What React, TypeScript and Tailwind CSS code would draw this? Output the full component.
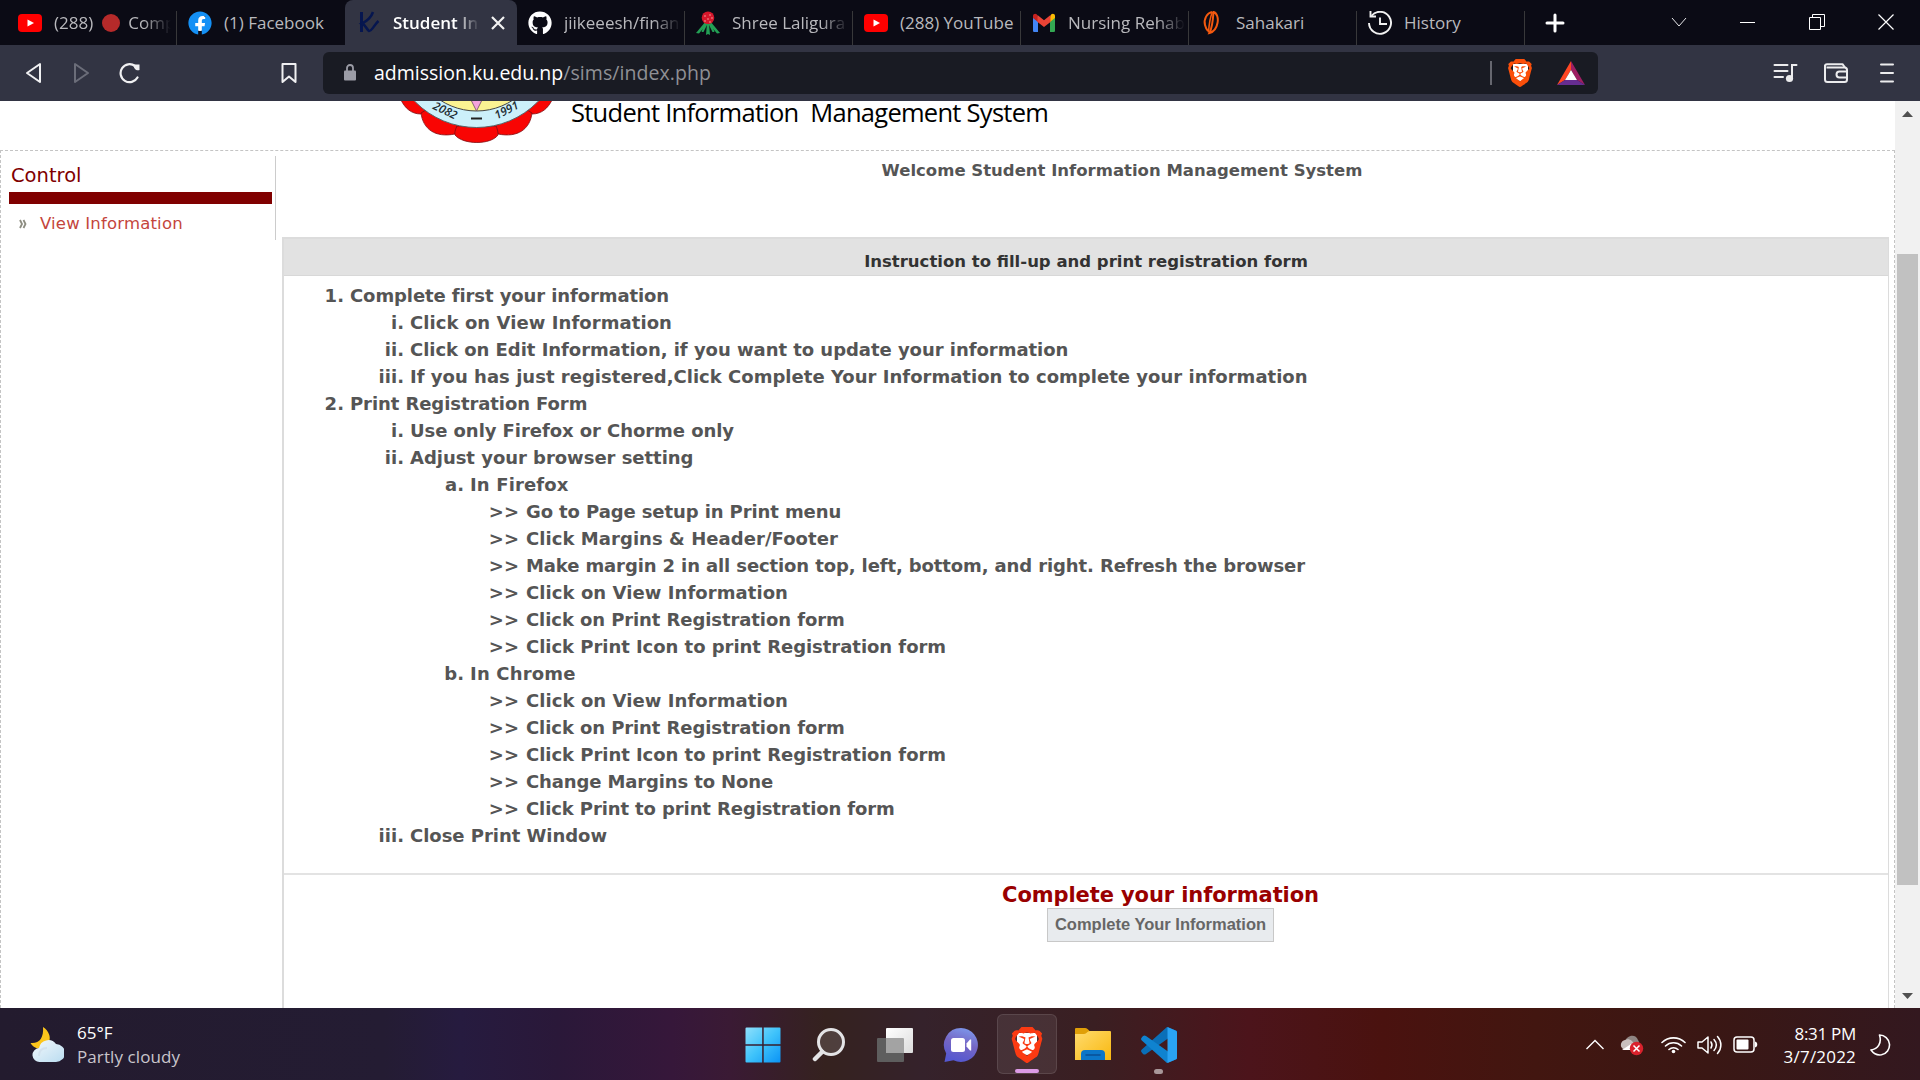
import type { ReactNode } from "react";
import { FaFacebook, FaGithub } from "react-icons/fa";
import { SiBrave } from "react-icons/si";

/* ---------- Favicons ---------- */

const YouTube = () => (
  <svg width="24" height="24" viewBox="0 0 24 24">
    <rect x="0" y="3" width="24" height="18" rx="4" fill="#f00" />
    <path d="M9.500 8.500v7l6.500-3.500z" fill="#fff" />
  </svg>
);

const Facebook = () => (
  <span className="relative flex size-6 items-center justify-center">
    <span className="absolute size-4 rounded-full bg-white" />
    <FaFacebook className="relative size-6 text-[#1490f5]" />
  </span>
);

const KFavicon = () => (
  <svg width="24" height="24" viewBox="0 0 24 24" fill="none" stroke="#06164f">
    <path d="M4.500 1v20" strokeWidth="3" />
    <path d="M16 1C14 7 10 10 5 12.500c3.500 1 4.500 6 7 7.500C15 20 17 14 21.500 10" strokeWidth="2.500" />
  </svg>
);

const Rhododendron = () => (
  <svg width="24" height="24" viewBox="0 0 24 24">
    <g fill="#23a055">
      <path d="M10 10 0 22l3 .5L11 13z" />
      <path d="M14 10l10 12-3 .5L13 13z" />
      <path d="M11 12l-1 12 2-1 2 1-1-12z" />
      <path d="M9 11 5.500 21h2L12 12z" />
      <path d="M15 11l3.500 10h-2L12 12z" />
    </g>
    <circle cx="12" cy="6.800" r="6.300" fill="#d5172b" />
    <g fill="#f5a6a0">
      <circle cx="9" cy="5" r=".8" />
      <circle cx="14" cy="4" r=".8" />
      <circle cx="12" cy="8" r=".8" />
      <circle cx="16" cy="7" r=".8" />
      <circle cx="9" cy="10" r=".8" />
      <circle cx="14" cy="11" r=".8" />
    </g>
  </svg>
);

const Gmail = () => (
  <svg width="24" height="24" viewBox="0 0 24 24">
    <path d="M1 6.500v13.200c0 .7.600 1.300 1.300 1.300H6V10z" fill="#4285f4" />
    <path d="M23 6.500v13.200c0 .7-.6 1.300-1.300 1.300H18V10z" fill="#34a853" />
    <path d="M18 5.500V11l5-4V5c0-2-2.200-3-3.700-1.700z" fill="#fbbc04" />
    <path d="M1 5v2l5 4V5.500L4.700 3.300C3.200 2 1 3 1 5z" fill="#c5221f" />
    <path d="M5.500 4 12 9.200 18.500 4v7L12 16 5.500 11z" fill="#ea4335" />
  </svg>
);

const Sahakari = () => (
  <svg width="24" height="24" viewBox="0 0 24 24" fill="none" stroke="#f4590f">
    <path d="M12 1C7 2 3.500 8 5 14c.6 2.500 1.500 4.500 3 6" strokeWidth="2" />
    <path d="M12.500 1C10 6 9 14 8.500 21.500" strokeWidth="1.600" />
    <path d="M13.500 1c3.500 1 5 6 4 11-1 5.500-4.500 9-8 10C12 17 13 9 13.500 1z" strokeWidth="2" />
  </svg>
);

const HistoryIcon = () => (
  <svg width="24" height="24" viewBox="0 0 24 24" fill="none" stroke="#f2f2f2" strokeWidth="1.900">
    <path d="M3.500 4.800A11 11 0 1 1 1 12" />
    <path d="M2.500 0v5.500H8" />
    <path d="M12 6.500V13h7" />
  </svg>
);

/* ---------- Tab strip ---------- */

type TabData = { label: ReactNode; icon: ReactNode; fade?: boolean };

const leftTabs: TabData[] = [
  {
    label: (
      <span className="flex items-center">
        (288)
        <span className="mr-[8px] ml-[9px] inline-block size-[18px] shrink-0 rounded-full bg-[#b62a2a]" />
        Comp
      </span>
    ),
    icon: <YouTube />,
    fade: true,
  },
  { label: "(1) Facebook", icon: <Facebook /> },
];

const rightTabs: TabData[] = [
  { label: "jiikeeesh/finan", icon: <FaGithub className="size-6 text-white" />, fade: true },
  { label: "Shree Laligura", icon: <Rhododendron />, fade: true },
  { label: "(288) YouTube", icon: <YouTube /> },
  { label: "Nursing Rehab", icon: <Gmail />, fade: true },
  { label: "Sahakari", icon: <Sahakari /> },
  { label: "History", icon: <HistoryIcon /> },
];

function Tab({ tab, divider, first }: { tab: TabData; divider: boolean; first?: boolean }) {
  return (
    <div className="flex h-[45px] w-[168px] items-end">
      <div
        className={
          first
            ? "flex h-[45px] flex-1 items-center gap-3 overflow-hidden pl-[9px]"
            : "flex h-[45px] flex-1 items-center gap-3 overflow-hidden pl-[11px]"
        }
      >
        <span className="shrink-0">{tab.icon}</span>
        <span
          className={
            tab.fade
              ? "w-[117px] shrink-0 overflow-hidden text-[17px] whitespace-nowrap text-[#b9b9bd] [mask-image:linear-gradient(to_right,#000_76%,transparent)]"
              : "shrink-0 text-[17px] whitespace-nowrap text-[#b9b9bd]"
          }
        >
          {tab.label}
        </span>
      </div>
      <div className={divider ? "h-[34px] w-[1.500px] bg-[#38383a]" : "w-[1.500px]"} />
    </div>
  );
}

function TabStrip() {
  return (
    <div className="flex h-[45px] bg-[#0b0b15] pl-[9px]">
      {leftTabs.map((t, i) => (
        <Tab key={i} tab={t} divider={i === 0} first={i === 0} />
      ))}
      <div className="flex h-[45px] w-[172px] items-center rounded-t-lg bg-[#323443] pl-3">
        <KFavicon />
        <span className="ml-3 w-[88px] text-[17px] font-semibold whitespace-nowrap text-white [mask-image:linear-gradient(to_right,#000_70%,transparent_98%)]">
          Student In
        </span>
        <svg className="ml-[10px]" width="14" height="14" viewBox="0 0 14 14" stroke="#f2f2f2" strokeWidth="2.200">
          <path d="M1 1l12 12M13 1 1 13" />
        </svg>
      </div>
      {rightTabs.map((t, i) => (
        <Tab key={i} tab={t} divider />
      ))}
      <div className="flex flex-1 items-center pl-5">
        <svg width="20" height="20" viewBox="0 0 20 20" stroke="#fff" strokeWidth="3" strokeLinecap="round">
          <path d="M10 2v16M2 10h16" />
        </svg>
        <div className="ml-auto flex items-center gap-[53px] pr-[26px] pb-[2px]">
          <svg width="16" height="16" viewBox="0 0 16 16" fill="none" stroke="#e8e8ea" strokeWidth="1">
            <path d="M1 4l7 8 7-8" />
          </svg>
          <svg width="16" height="16" viewBox="0 0 16 16" fill="#fff">
            <path d="M0 8h15v1H0z" />
          </svg>
          <svg width="16" height="16" viewBox="0 0 16 16" fill="none" stroke="#fff" strokeWidth="1">
            <path d="M.5 3.500h11v12H.5zM3.500 3.500v-3h12v12h-4" />
          </svg>
          <svg width="16" height="16" viewBox="0 0 16 16" stroke="#fff" strokeWidth="1.200">
            <path d="M.5.5l15 15M15.500.5l-15 15" />
          </svg>
        </div>
      </div>
    </div>
  );
}

/* ---------- Toolbar ---------- */

function BraveLion({ className, face }: { className: string; face: string }) {
  return (
    <span className="relative flex items-center justify-center">
      <span className={face} />
      <SiBrave className={className} />
    </span>
  );
}

function Toolbar() {
  return (
    <div className="flex h-14 items-center bg-[#323443] pr-[26px] pb-px pl-[25px]">
      <svg width="18" height="22" viewBox="0 0 18 22" fill="none" stroke="#f0f0f2" strokeWidth="2" strokeLinejoin="round">
        <path d="M15 2v18L2 11z" />
      </svg>
      <svg className="ml-[30px]" width="18" height="22" viewBox="0 0 18 22" fill="none" stroke="#6b6d79" strokeWidth="2" strokeLinejoin="round">
        <path d="M2 2v18l13-9z" />
      </svg>
      <svg className="ml-[27px]" width="24" height="22" viewBox="0 0 24 22" fill="none" stroke="#f0f0f2" strokeWidth="2.200" strokeLinecap="round">
        <path d="M19.500 15.500A9 9 0 1 1 17 4" />
        <path d="M15.500 2.500h6v5.500c-3 1-6-1-6-5.500z" fill="#f0f0f2" stroke="none" />
      </svg>
      <svg className="ml-[139px]" width="16" height="22" viewBox="0 0 16 22" fill="none" stroke="#f0f0f2" strokeWidth="2" strokeLinejoin="round">
        <path d="M1.500 2h13v18L8 14.500 1.500 20z" />
      </svg>
      <div className="ml-[26px] flex h-[42px] w-[1275px] items-center rounded-md bg-[#191b23] pr-[13px] pl-[21px]">
        <svg width="12" height="17" viewBox="0 0 12 17">
          <rect x="0" y="6.500" width="12" height="10" rx="1" fill="#9b9ca6" />
          <path d="M3 7V4a3 3 0 0 1 6 0v3" fill="none" stroke="#9b9ca6" strokeWidth="1.800" />
        </svg>
        <span className="ml-[18px] text-[19.500px] whitespace-nowrap text-white">
          admission.ku.edu.np<span className="tracking-[0.060px] text-[#8f9095]">/sims/index.php</span>
        </span>
        <span className="ml-auto h-6 w-[2px] bg-[#66676f]" />
        <span className="ml-[14px]">
          <BraveLion
            className="relative size-7 text-[#fb4f0a]"
            face="absolute top-[5px] h-[17px] w-[15px] rounded-b-full rounded-t bg-white"
          />
        </span>
        <svg className="ml-[23px]" width="28" height="24" viewBox="0 0 28 24">
          <path d="M14 0 0 24l8-5 6-10z" fill="#ff4724" />
          <path d="M14 0l14 24-8-5-6-10z" fill="#9e1f63" />
          <path d="M0 24h28l-8-5H8z" fill="#662d91" />
          <path d="M14 9l6 10H8z" fill="#fff" />
        </svg>
      </div>
      <svg className="ml-auto" width="25" height="20" viewBox="0 0 25 20" fill="none" stroke="#ececee" strokeWidth="2" strokeLinecap="round">
        <path d="M1.500 2h13M1.500 8h13M1.500 14H10" />
        <path d="M19 15.500V2h4.500" />
        <circle cx="16.500" cy="15.500" r="3.600" fill="#ececee" stroke="none" />
      </svg>
      <svg className="ml-[26px]" width="24" height="20" viewBox="0 0 24 20" fill="none" stroke="#ececee" strokeWidth="2" strokeLinejoin="round">
        <path d="M1 2v14.500c0 1.400.8 2.500 2.500 2.500h17c1.500 0 2.500-1 2.500-2.500V7c0-1.500-1-2.500-2.500-2.500H2.500" />
        <path d="M1 3.500C1 1.800 2 1.200 3 1.200h15.500L21 4.500" />
        <path d="M23 8.500h-7.500a3 3 0 0 0 0 6H23" />
      </svg>
      <svg className="ml-[32px]" width="14" height="20" viewBox="0 0 14 20" stroke="#ececee" strokeWidth="2" strokeLinecap="round">
        <path d="M1 1.500h12M1 10h12M1 18.500h12" />
      </svg>
    </div>
  );
}

/* ---------- Page ---------- */

function Seal() {
  return (
    <svg width="160" height="44" viewBox="396 101 160 44">
      <g fill="#f90503" stroke="#7d0d12" strokeWidth=".8">
        <path d="M401 100c4 8 10 14 20 14l14-14z" />
        <path d="M552 100c-4 8-10 14-20 14l-14-14z" />
        <path d="M421 113c2 16 14 25 34 21l4-14-30-12z" />
        <path d="M532 113c-2 16-14 25-34 21l-4-14 30-12z" />
        <path d="M457 126c-3 6-2 8-2 9 8 10 36 10 43 0 0-1 0-5-2-9z" />
      </g>
      <circle cx="476.500" cy="41.500" r="86" fill="#ccf0fa" stroke="#54666b" strokeWidth="1" />
      <circle cx="476.500" cy="45" r="66" fill="#fbf392" stroke="#444" strokeWidth="1" />
      <path d="M470 98h13l-6.500 13z" fill="#f5a3dc" stroke="#6b4a60" strokeWidth=".8" />
      <rect x="471" y="117.500" width="11" height="2" fill="#222" />
      <g fontFamily="'Open Sans', sans-serif" fontStyle="italic" fontWeight="600" fontSize="11.500" fill="#1c2a30">
        <text transform="translate(432 108.500) rotate(26)">2082</text>
        <text transform="translate(497 119.500) rotate(-27)">1991</text>
      </g>
    </svg>
  );
}

type Row = { mark: string; text: string; level: 0 | 1 | 2 | 3; track?: string };

const rows: Row[] = [
  { level: 0, mark: "1.", text: "Complete first your information", track: "tracking-[-0.100px]" },
  { level: 1, mark: "i.", text: "Click on View Information", track: "tracking-[0.070px]" },
  { level: 1, mark: "ii.", text: "Click on Edit Information, if you want to update your information", track: "tracking-[-0.035px]" },
  { level: 1, mark: "iii.", text: "If you has just registered,Click Complete Your Information to complete your information" },
  { level: 0, mark: "2.", text: "Print Registration Form", track: "tracking-[-0.080px]" },
  { level: 1, mark: "i.", text: "Use only Firefox or Chorme only", track: "tracking-[-0.060px]" },
  { level: 1, mark: "ii.", text: "Adjust your browser setting", track: "tracking-[-0.030px]" },
  { level: 2, mark: "a.", text: "In Firefox", track: "tracking-[0.140px]" },
  { level: 3, mark: ">>", text: "Go to Page setup in Print menu", track: "tracking-[-0.100px]" },
  { level: 3, mark: ">>", text: "Click Margins & Header/Footer", track: "tracking-[0.060px]" },
  {
    level: 3,
    mark: ">>",
    text: "Make margin 2 in all section top, left, bottom, and right. Refresh the browser",
    track: "tracking-[-0.115px]",
  },
  { level: 3, mark: ">>", text: "Click on View Information", track: "tracking-[0.070px]" },
  { level: 3, mark: ">>", text: "Click on Print Registration form", track: "tracking-[-0.085px]" },
  { level: 3, mark: ">>", text: "Click Print Icon to print Registration form", track: "tracking-[-0.035px]" },
  { level: 2, mark: "b.", text: "In Chrome", track: "tracking-[0.180px]" },
  { level: 3, mark: ">>", text: "Click on View Information", track: "tracking-[0.070px]" },
  { level: 3, mark: ">>", text: "Click on Print Registration form", track: "tracking-[-0.085px]" },
  { level: 3, mark: ">>", text: "Click Print Icon to print Registration form", track: "tracking-[-0.035px]" },
  { level: 3, mark: ">>", text: "Change Margins to None", track: "tracking-[-0.130px]" },
  { level: 3, mark: ">>", text: "Click Print to print Registration form", track: "tracking-[-0.105px]" },
  { level: 1, mark: "iii.", text: "Close Print Window", track: "tracking-[-0.030px]" },
];

const markBox = ["w-[66px] pr-[6px]", "w-[126px] pr-[6px]", "w-[186px] pr-[6px]", "w-[242px] pr-[7px]"];

function Instructions() {
  return (
    <div className="h-[597px] pt-[6px] text-[18px] leading-[27px] font-bold tracking-[0.020px] text-[#555]">
      {rows.map((r, i) => (
        <div key={i} className="flex whitespace-nowrap">
          <span className={`${markBox[r.level]} shrink-0 text-right`}>{r.mark}</span>
          <span className={r.track}>{r.text}</span>
        </div>
      ))}
    </div>
  );
}

function Sidebar() {
  return (
    <div className="h-[84px] w-[275px] shrink-0 border-r border-[#ccc] pl-2">
      <div className="h-9 pt-[6px] pl-[2px] text-[19.500px] leading-[28px] text-[#800000]">Control</div>
      <div className="h-3 w-[263px] bg-[#800000]" />
      <div className="flex items-center pt-[6px] pl-[10px]">
        <svg width="8" height="10" viewBox="0 0 8 10" fill="none" stroke="#8c8c80" strokeWidth="1.800">
          <path d="M1 1l2 4-2 4M4.500 1l2 4-2 4" />
        </svg>
        <span className="ml-[13px] text-[16.500px] leading-[28px] tracking-[0.180px] text-[#c4453c]">View Information</span>
      </div>
    </div>
  );
}

function Page() {
  return (
    <div className="flex h-[907px] bg-white font-['DejaVu_Sans',Verdana,sans-serif]">
      <div className="flex w-[1895px] flex-col overflow-hidden">
        <div className="flex h-[49px] shrink-0 pl-[396px]">
          <Seal />
          <span className="ml-[15px] font-['Open_Sans',sans-serif] text-[25.500px] leading-[23px] tracking-[-0.730px] whitespace-pre text-black">
            {"Student Information  Management System"}
          </span>
        </div>
        <div className="flex flex-1 border-x border-t border-dashed border-[#c4c4c4] pt-[5px]">
          <Sidebar />
          <div className="ml-[6px] flex w-[1607px] flex-col">
            <div className="h-[81px] shrink-0 pt-px pl-[73px] text-center text-[16.500px] leading-[28px] font-bold text-[#555]">
              Welcome Student Information Management System
            </div>
            <div className="flex-1 border-t-2 border-r border-l-2 border-[#dcdcdc]">
              <div className="h-[37px] border-b border-[#d8d8d8] bg-[#e2e2e2] pt-[9px] text-center text-[16.500px] leading-[27px] font-bold text-[#333]">
                Instruction to fill-up and print registration form
              </div>
              <Instructions />
              <div className="flex flex-col items-center border-t-2 border-[#e3e3e3] pt-[7px] pl-[149px]">
                <span className="text-[21px] leading-[26px] font-bold tracking-[-0.100px] text-[#990000]">
                  Complete your information
                </span>
                <button className="h-[34px] w-[227px] border border-[#c8c8c8] bg-[#e8ebee] pb-[2px] font-['Liberation_Sans',Arial,sans-serif] text-[16.500px] leading-none font-bold text-[#666]">
                  Complete Your Information
                </button>
              </div>
            </div>
          </div>
        </div>
      </div>
      <div className="flex w-[25px] flex-col items-center bg-[#f1f1f1]">
        <svg className="mt-[10px]" width="11" height="6" viewBox="0 0 11 6" fill="#505050">
          <path d="M0 6 5.500 0 11 6z" />
        </svg>
        <div className="mt-[137px] h-[631px] w-[21px] bg-[#c1c1c1]" />
        <svg className="mt-auto mb-[9px]" width="11" height="6" viewBox="0 0 11 6" fill="#505050">
          <path d="M0 0h11L5.500 6z" />
        </svg>
      </div>
    </div>
  );
}

/* ---------- Taskbar ---------- */

const WindowsLogo = () => (
  <svg width="36" height="36" viewBox="0 0 36 36">
    <defs>
      <linearGradient id="win" x1="0" y1="0" x2="1" y2="1">
        <stop offset="0" stopColor="#8fe0fb" />
        <stop offset=".5" stopColor="#3fc3fb" />
        <stop offset="1" stopColor="#0a93f5" />
      </linearGradient>
    </defs>
    <path d="M1.500.5h15.700v16.700H.5V1.500a1 1 0 0 1 1-1zM18.700.5h15.800a1 1 0 0 1 1 1v15.700H18.700zM.5 18.700h16.700v16.800H1.500a1 1 0 0 1-1-1zM18.700 18.700h16.800v15.800a1 1 0 0 1-1 1H18.700z" fill="url(#win)" />
  </svg>
);

const SearchLogo = () => (
  <svg width="34" height="36" viewBox="0 0 34 36" fill="none" stroke="#e4e4e6">
    <circle cx="19" cy="15" r="12.500" strokeWidth="3" fill="#ffffff22" />
    <path d="M10 25l-7 7" strokeWidth="4.500" strokeLinecap="round" />
  </svg>
);

const TaskViewLogo = () => (
  <svg width="36" height="34" viewBox="0 0 36 34">
    <defs>
      <linearGradient id="tv" x1="0" y1="0" x2="1" y2="1">
        <stop offset="0" stopColor="#fff" />
        <stop offset="1" stopColor="#dcdcdc" />
      </linearGradient>
    </defs>
    <rect x="0" y="10" width="27" height="24" rx="1" fill="#5e5e5e" />
    <rect x="9" y="0" width="27" height="25" rx="1" fill="url(#tv)" />
    <path d="M9 10h17a1 1 0 0 1 1 1v14H9z" fill="#a3a3a3" />
  </svg>
);

const ChatLogo = () => (
  <svg width="36" height="36" viewBox="0 0 36 36">
    <defs>
      <linearGradient id="chat" x1="0.800" y1="0" x2="0.500" y2="1">
        <stop offset="0" stopColor="#7d9bee" />
        <stop offset=".5" stopColor="#7566c4" />
        <stop offset="1" stopColor="#5558d0" />
      </linearGradient>
    </defs>
    <path d="M18 1a17 17 0 1 1-7.500 32.300L1.500 35l1.700-8.500A17 17 0 0 1 18 1z" fill="url(#chat)" />
    <rect x="8" y="11" width="14" height="14" rx="2.500" fill="#fff" />
    <path d="M23.500 16.500l3.500-4h1.200v11H27l-3.500-4z" fill="#fff" />
  </svg>
);

const FolderLogo = () => (
  <svg width="36" height="32" viewBox="0 0 36 32">
    <defs>
      <linearGradient id="fold" x1="0" y1="0" x2="1" y2="1">
        <stop offset="0" stopColor="#ffdb6e" />
        <stop offset="1" stopColor="#f9b80f" />
      </linearGradient>
    </defs>
    <path d="M0 1a1 1 0 0 1 1-1h9c2 0 3 1.500 5 3.500L13 8H0z" fill="#e09f08" />
    <path d="M0 6h9c3 0 3-3 6-3h20a1 1 0 0 1 1 1v28H0z" fill="url(#fold)" />
    <path d="M6 32v-6a4 4 0 0 1 4-4h16a4 4 0 0 1 4 4v6z" fill="#0b76c8" />
    <path d="M11 27h14" stroke="#0a4f94" strokeWidth="1.500" strokeLinecap="round" />
  </svg>
);

const CodeLogo = () => (
  <svg width="36" height="36" viewBox="0 0 36 36">
    <path d="M26 0l10 4v6.500l-9 1L5 27c-1 .8-2 .7-3 0L.8 25.500c-1-1-1-2 0-3z" fill="#0a6fb8" />
    <path d="M26 36l10-4v-6.500l-9-1L5 9c-1-.8-2-.7-3 0L.8 10.500c-1 1-1 2 0 3z" fill="#0f83d0" />
    <path d="M26.500 0l8 3.500A2.500 2.500 0 0 1 36 6v24a2.500 2.500 0 0 1-1.500 2.500l-8 3.500z" fill="#2aa3f3" />
  </svg>
);

function WeatherIcon() {
  return (
    <svg width="34" height="38" viewBox="0 0 34 38">
      <defs>
        <linearGradient id="cl" x1="0" y1="0" x2="1" y2="1">
          <stop offset="0" stopColor="#f3f8fc" />
          <stop offset="1" stopColor="#b9dcf0" />
        </linearGradient>
      </defs>
      <path d="M13 1c6 4 8 10 6 15s-6 8-10 7-7-3-8.500-6C9 18 14 12 13 1z" fill="#fcc61c" />
      <path d="M10 36a7 7 0 0 1-1-14 9.500 9.500 0 0 1 17-4 9 9 0 0 1 0 18z" fill="url(#cl)" />
      <path d="M9 30c0-5 3-8 8-8" stroke="#d3e2ee" strokeWidth="2" fill="none" />
    </svg>
  );
}

function Dock() {
  return (
    <div className="flex h-[60px] w-[462px] items-center">
      {[WindowsLogo, SearchLogo, TaskViewLogo, ChatLogo].map((Logo, i) => (
        <div key={i} className="flex w-[66px] justify-center pt-[2px]">
          <Logo />
        </div>
      ))}
      <div className="flex w-[66px] justify-center">
        <div className="flex h-[60px] w-[60px] flex-col items-center rounded-md border border-white/10 bg-white/8 pt-[12px]">
          <BraveLion
            className="relative size-9 text-[#fb3a12]"
            face="absolute top-[6px] h-[22px] w-5 rounded-b-full rounded-t bg-white"
          />
          <div className="mt-[6px] h-[5px] w-6 rounded-full bg-[#dc9be6]" />
        </div>
      </div>
      <div className="flex w-[66px] justify-center">
        <FolderLogo />
      </div>
      <div className="flex h-[60px] w-[66px] flex-col items-center pt-[13px]">
        <CodeLogo />
        <div className="mt-[6px] h-[5px] w-[9px] rounded-full bg-[#a89799]" />
      </div>
    </div>
  );
}

function Tray() {
  return (
    <div className="flex items-center pt-px">
      <svg width="18" height="11" viewBox="0 0 18 11" fill="none" stroke="#fff" strokeWidth="1.400">
        <path d="M.5 10 9 1.500l8.500 8.500" />
      </svg>
      <svg className="ml-[15px]" width="25" height="22" viewBox="0 0 25 22">
        <path d="M6 8C7 1 17-1 19 6c2 2 1 7-3 8H6z" fill="#8f8482" />
        <path d="M4 15a5 5 0 0 1 2-9c4-2 8 1 9 4l-4 5z" fill="#c9c0be" />
        <path d="M3 16 12 10l7 6z" fill="#fff" />
        <circle cx="17.500" cy="14.500" r="6.700" fill="#d9222c" />
        <path d="M14.500 11.500l6 6M20.500 11.500l-6 6" stroke="#fff" strokeWidth="1.500" />
      </svg>
      <svg className="ml-[17px]" width="25" height="19" viewBox="0 0 25 19" fill="none" stroke="#fff" strokeWidth="1.600" strokeLinecap="round">
        <path d="M1 7.500a16.500 16.500 0 0 1 23 0M4.500 11a11.500 11.500 0 0 1 16 0M8 14.500a6.500 6.500 0 0 1 9 0" />
        <circle cx="12.500" cy="16.500" r="1.800" fill="#fff" stroke="none" />
      </svg>
      <svg className="ml-[11px]" width="25" height="20" viewBox="0 0 25 20" fill="none" stroke="#fff" strokeWidth="1.500" strokeLinecap="round" strokeLinejoin="round">
        <path d="M1 7v6h4l6 5V2L5 7z" />
        <path d="M14 7c1.300 2 1.300 4 0 6M17 4.500c3 3.500 3 7.500 0 11M20.500 1.500c4.500 5 4.500 12 0 17" />
      </svg>
      <svg className="ml-[11px]" width="25" height="17" viewBox="0 0 25 17" fill="none">
        <rect x="1" y="1" width="20" height="15" rx="3" stroke="#fff" strokeWidth="1.500" />
        <rect x="3.500" y="3.500" width="12" height="10" rx="1" fill="#fff" />
        <path d="M22 5.500c3 .5 3 5.500 0 6z" fill="#fff" />
      </svg>
      <div className="w-[98px] text-right text-[17px] leading-[23px] whitespace-nowrap text-white">
        <div className="tracking-[-0.300px]">8:31 PM</div>
        <div className="tracking-[0.200px]">3/7/2022</div>
      </div>
      <svg className="ml-[14px]" width="21" height="22" viewBox="0 0 21 22" fill="none" stroke="#fff" strokeWidth="1.600" strokeLinejoin="round">
        <path d="M9.500 1a10 10 0 0 1 2 19.800C7 21.500 3.500 19.500 1 16c7-1 11-7 8.500-15z" />
      </svg>
    </div>
  );
}

function Taskbar() {
  return (
    <div className="flex h-[72px] items-center bg-[linear-gradient(to_right,#231b2e_0%,#241c33_20%,#261b3f_24%,#2a1839_29%,#36173a_35%,#3a1a34_38%,#35221f_43%,#35222b_48%,#3a1f22_57%,#4c141b_65%,#4a120f_72%,#421610_80%,#3a1714_89%,#33181f_100%)] pr-[29px] pl-[30px]">
      <div className="flex flex-1 items-center gap-[13px] pt-[2px]">
        <WeatherIcon />
        <div className="text-[17px] leading-[24px]">
          <div className="text-white">65°F</div>
          <div className="tracking-[0.100px] text-[#c9c5cc]">Partly cloudy</div>
        </div>
      </div>
      <Dock />
      <div className="flex flex-1 justify-end">
        <Tray />
      </div>
    </div>
  );
}

export default function App() {
  return (
    <div className="h-[1080px] w-[1920px] overflow-hidden font-['Open_Sans',sans-serif]">
      <TabStrip />
      <Toolbar />
      <Page />
      <Taskbar />
    </div>
  );
}
